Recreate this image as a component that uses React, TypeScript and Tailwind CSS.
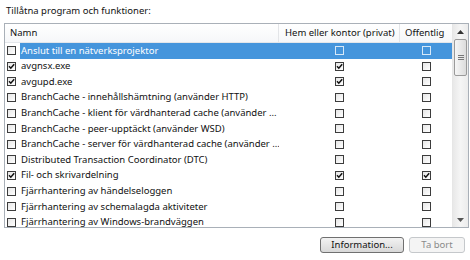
import React from "react";

type Row = { name: string; a: boolean; h: boolean; o: boolean; sel?: boolean };

const rows: Row[] = [
  { name: "Anslut till en nätverksprojektor", a: false, h: false, o: false, sel: true },
  { name: "avgnsx.exe", a: true, h: true, o: false },
  { name: "avgupd.exe", a: true, h: true, o: false },
  { name: "BranchCache - innehållshämtning (använder HTTP)", a: false, h: false, o: false },
  { name: "BranchCache - klient för värdhanterad cache (använder ...", a: false, h: false, o: false },
  { name: "BranchCache - peer-upptäckt (använder WSD)", a: false, h: false, o: false },
  { name: "BranchCache - server för värdhanterad cache (använder ...", a: false, h: false, o: false },
  { name: "Distributed Transaction Coordinator (DTC)", a: false, h: false, o: false },
  { name: "Fil- och skrivardelning", a: true, h: true, o: true },
  { name: "Fjärrhantering av händelseloggen", a: false, h: false, o: false },
  { name: "Fjärrhantering av schemalagda aktiviteter", a: false, h: false, o: false },
  { name: "Fjärrhantering av Windows-brandväggen", a: false, h: false, o: false },
];

function Box({ checked, onBlue }: { checked: boolean; onBlue?: boolean }) {
  return (
    <div
      className={
        onBlue
          ? "w-[9px] h-[9px] border border-[#d6e8f8] bg-[#4595dc] shrink-0"
          : "w-[9px] h-[9px] border border-[#3c3c3c] bg-gradient-to-br from-[#e6e6e6] to-white shrink-0 relative"
      }
    >
      {checked && (
        <svg width="7" height="7" viewBox="0 0 7 7" className="absolute left-0 top-0">
          <path d="M1 3.3 L2.8 5.2 L6.2 1.2" fill="none" stroke="#111" strokeWidth="1.5" />
        </svg>
      )}
    </div>
  );
}

export default function App() {
  return (
    <div
      className="w-[470px] h-[260px] bg-white flex flex-col text-[9.5px] text-[#111] overflow-hidden"
      style={{ fontFamily: '"Noto Sans", "Open Sans", sans-serif' }}
    >
      <div className="h-[23px] pl-[6px] flex items-center">Tillåtna program och funktioner:</div>
      <div className="ml-[4px] w-[465px] h-[205px] border border-[#a9b0b8] flex">
        <div className="w-[447px] flex flex-col overflow-hidden">
          <div className="h-[19px] shrink-0 flex bg-gradient-to-b from-white to-[#f6f7f9] border-b border-[#e3e6ea]">
            <div className="w-[274px] border-r border-[#e3e5e8] pl-[5px] flex items-center">Namn</div>
            <div className="w-[121px] border-r border-[#e3e5e8] pl-[6px] flex items-center">Hem eller kontor (privat)</div>
            <div className="flex-1 pl-[5px] flex items-center">Offentlig</div>
          </div>
          {rows.map((r, i) => (
            <div key={i} className="h-[15.6px] shrink-0 flex items-center">
              <div className="w-[274px] h-full flex items-center pl-[2px]">
                <Box checked={r.a} />
                <div
                  className={
                    r.sel
                      ? "ml-[4px] pl-[1px] h-full flex-1 flex items-center bg-[#4595dc] text-white whitespace-nowrap overflow-hidden"
                      : "ml-[4px] pl-[1px] h-full flex-1 flex items-center whitespace-nowrap overflow-hidden"
                  }
                >
                  {r.name}
                </div>
              </div>
              <div className={r.sel ? "w-[121px] h-full flex items-center justify-center bg-[#4595dc]" : "w-[121px] h-full flex items-center justify-center"}>
                <Box checked={r.h} onBlue={r.sel} />
              </div>
              <div className={r.sel ? "flex-1 h-full flex items-center justify-center bg-[#4595dc]" : "flex-1 h-full flex items-center justify-center"}>
                <Box checked={r.o} onBlue={r.sel} />
              </div>
            </div>
          ))}
        </div>
        <div className="w-[16px] flex flex-col bg-gradient-to-r from-[#e8e8e8] via-[#f5f5f5] to-[#ececec] border-l border-[#e6e6e6]">
          <div className="h-[15px] flex items-center justify-center">
            <svg width="7" height="4" viewBox="0 0 7 4"><path d="M0 4 L3.5 0 L7 4 Z" fill="#333" /></svg>
          </div>
          <div className="mx-[1px] h-[37px] rounded-[2px] border border-[#9a9a9a] bg-gradient-to-r from-[#f6f6f6] to-[#dcdcdc] flex flex-col items-center justify-center gap-[1px]">
            <div className="w-[6px] h-[1px] bg-[#777]" />
            <div className="w-[6px] h-[1px] bg-[#777]" />
            <div className="w-[6px] h-[1px] bg-[#777]" />
          </div>
          <div className="flex-1" />
          <div className="h-[15px] flex items-center justify-center">
            <svg width="7" height="4" viewBox="0 0 7 4"><path d="M0 0 L3.5 4 L7 0 Z" fill="#555" /></svg>
          </div>
        </div>
      </div>
      <div className="mt-[9px] flex justify-end gap-[5px] pr-[5px]">
        <div className="w-[84px] h-[16px] rounded-[3px] border border-[#707070] bg-gradient-to-b from-[#f2f2f2] to-[#d8d8d8] flex items-center justify-center">
          Information...
        </div>
        <div className="w-[56px] h-[16px] rounded-[3px] border border-[#c5c8cb] bg-[#f4f4f4] text-[#8a8a8a] flex items-center justify-center">
          Ta bort
        </div>
      </div>
    </div>
  );
}
